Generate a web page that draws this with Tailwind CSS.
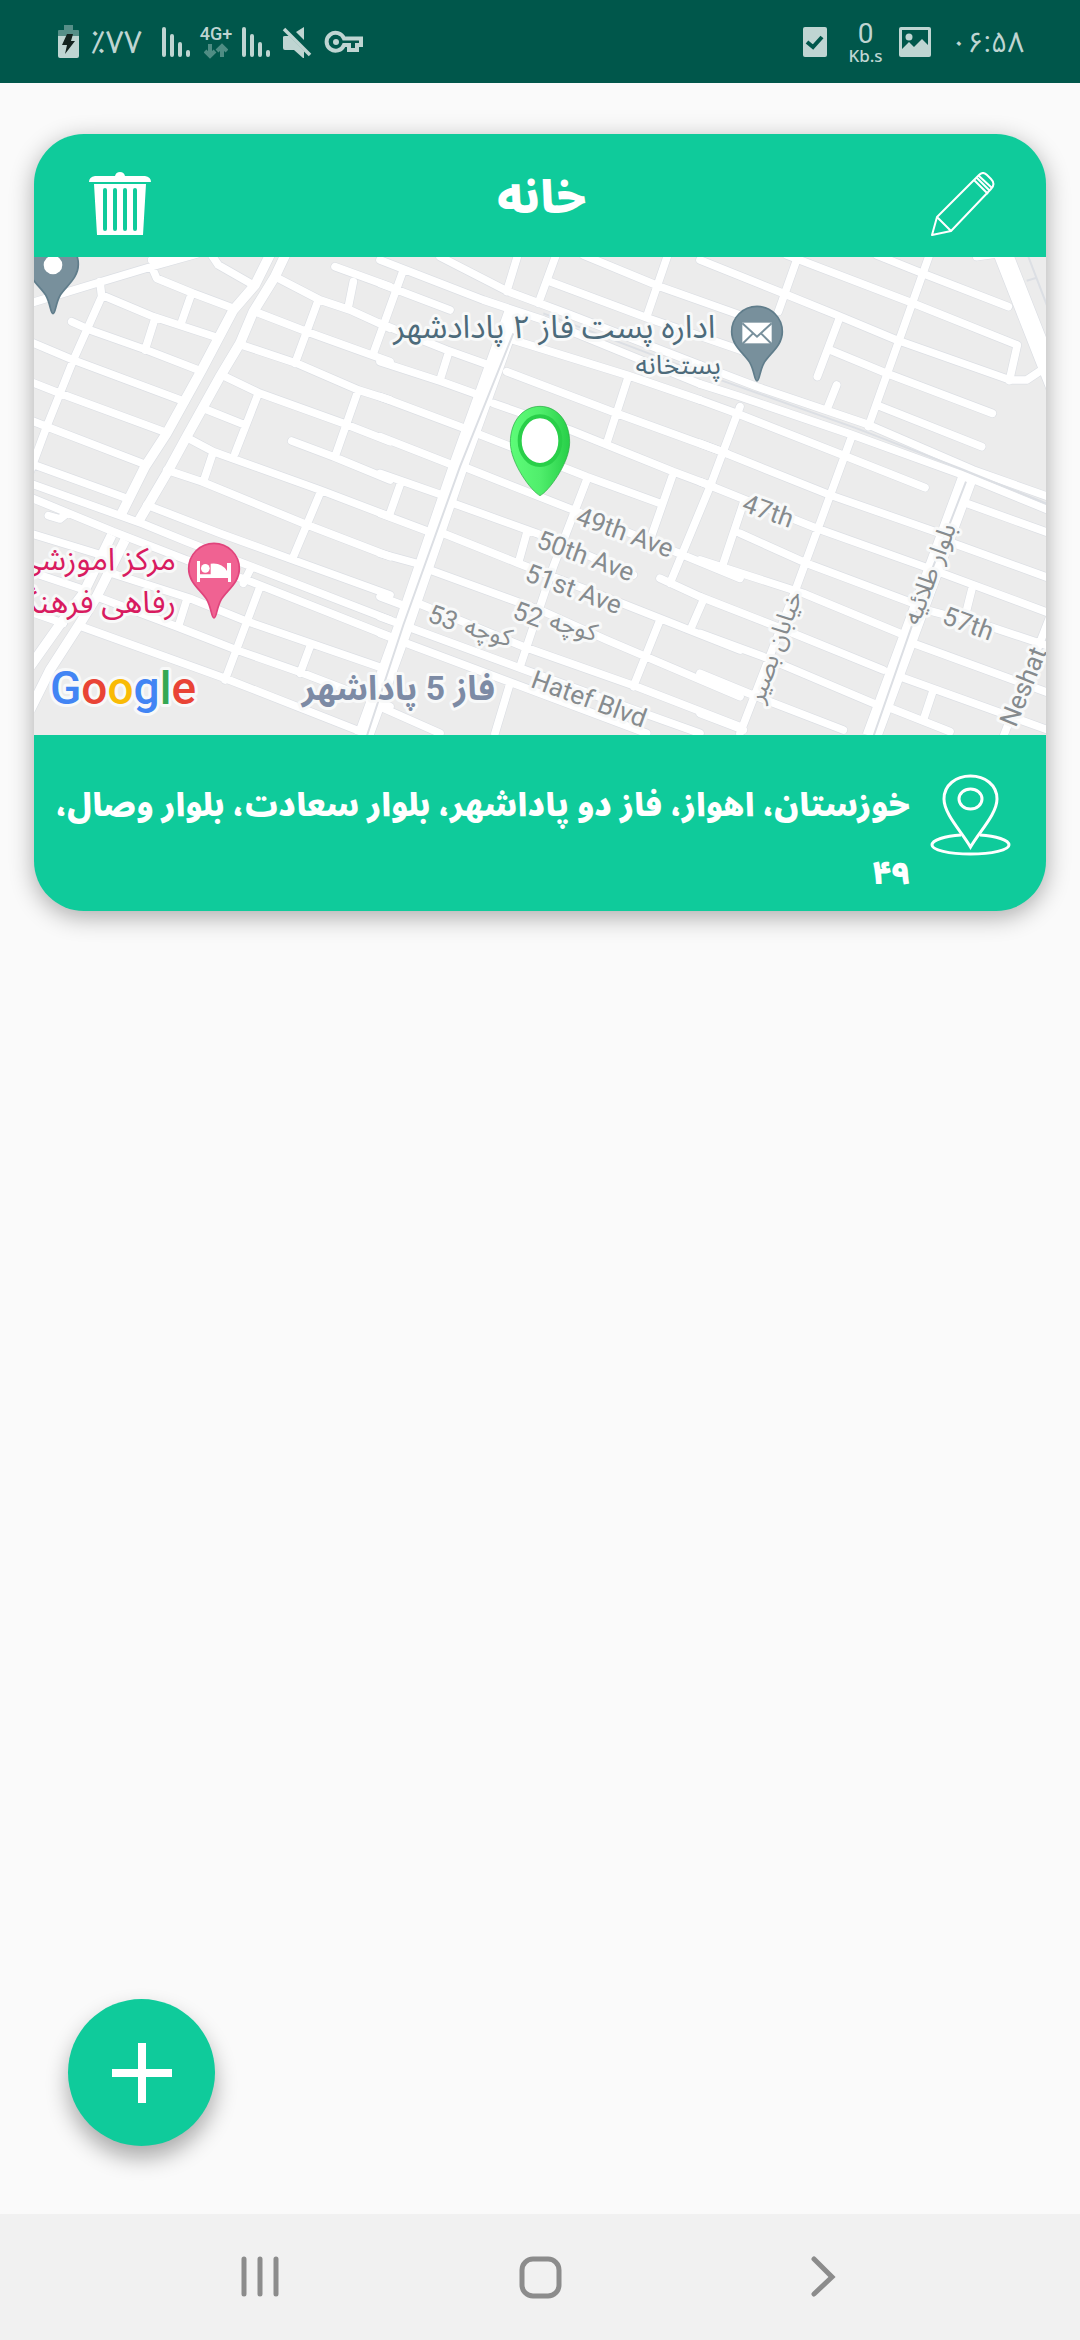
<!DOCTYPE html>
<html lang="fa">
<head>
<meta charset="utf-8">
<meta name="viewport" content="width=device-width, initial-scale=1">
<title>آدرس‌ها</title>
<script src="https://cdn.jsdelivr.net/npm/@tailwindcss/browser@4"></script>
</head>
<body class="flex min-h-screen flex-col bg-[#fafafa] font-['Roboto','Noto_Sans_Arabic','DejaVu_Sans',sans-serif]">

<header class="flex h-[83px] items-center justify-between bg-[#00574b] pr-14 pl-14 text-[#bfd5d2]">
  <div class="flex items-center">
    <svg class="mr-3 h-9 w-6" viewBox="0 0 24 36" fill="currentColor"><path opacity=".45" d="M8 1h9v5h5q1 0 1 1v5H2V7q0-1 1-1h5z"/><path d="M2 12h21v20q0 2-2 2H4q-2 0-2-2z"/><path fill="#14231f" d="M11 10h6l-2 7h4L9 30l2-9H6z"/></svg>
    <span dir="rtl" class="mr-[18px] w-[50px] text-[32px] leading-10 whitespace-nowrap">٪۷۷</span>
    <svg class="mr-2 h-8 w-[30px]" viewBox="0 0 30 32" stroke="currentColor" stroke-width="4" stroke-linecap="round"><path d="M4 3v26M12 10v19M20 18v11M28 26v3"/></svg>
    <div class="mr-1.5 flex w-9 flex-col items-center">
      <span class="text-lg leading-[18px] font-medium">4G+</span>
      <svg class="h-4 w-6" viewBox="0 0 24 16" fill="none" stroke="#4f8d84" stroke-width="4"><path d="M6 1v12M1 8l5 5 5-5M18 14V3M13 8l5-5 5 5"/></svg>
    </div>
    <svg class="mr-3 h-8 w-[30px]" viewBox="0 0 30 32" stroke="currentColor" stroke-width="4" stroke-linecap="round"><path d="M4 3v26M12 10v19M20 18v11M28 26v3"/></svg>
    <svg class="mr-3 h-8 w-[30px]" viewBox="0 0 30 32" fill="currentColor"><path d="M22 1v13l-8-8zM1 11q0-1 2-1h4l15 15v7h-1l-9-8H3q-2 0-2-2z"/><path d="M2 3l26 26" stroke="currentColor" stroke-width="3.500"/></svg>
    <svg class="h-6 w-10" viewBox="0 0 40 24" fill="none" stroke="currentColor" stroke-width="4"><path d="M20 8.500h17V15h-4v5h-8v-5h-5a9 9 0 1 1 0-6.500z"/><circle cx="12" cy="12" r="3" fill="currentColor" stroke="none"/></svg>
  </div>
  <div class="flex items-center">
    <svg class="mr-5 h-8 w-[26px]" viewBox="0 0 26 32"><rect x="1" y="1" width="24" height="30" rx="2" fill="currentColor"/><path d="M5 16l6 5 9-10" fill="none" stroke="#00574b" stroke-width="4"/></svg>
    <div class="mr-4 flex flex-col items-center"><span class="text-[28px] leading-7">0</span><span class="font-['Noto_Sans'] text-[17px] leading-4 font-medium">Kb.s</span></div>
    <svg class="mr-5 h-8 w-8" viewBox="0 0 32 32"><path fill="currentColor" fill-rule="evenodd" d="M2 1h28q2 0 2 2v26q0 2-2 2H2q-2 0-2-2V3q0-2 2-2zm1 3v19l7-7 5 5 8-8 6 6V4z"/><circle cx="10" cy="11" r="3.500" fill="currentColor"/></svg>
    <time dir="ltr" class="text-[29px] leading-10">۰۶:۵۸</time>
  </div>
</header>

<main class="flex grow flex-col justify-between px-[34px] pt-[51px]">
  <article class="overflow-hidden rounded-[50px] bg-[#0fcb9b] text-white shadow-[0_6px_24px_rgba(0,0,0,0.32)]">
    <div class="flex h-[123px] items-center justify-between pt-4 pr-[51px] pl-[54px]">
      <button aria-label="حذف" class="block">
        <svg class="h-16 w-16" viewBox="0 0 64 64" fill="#fff"><path d="M1 10q0-5 6-6h20q1-4 5-4t5 4h20q6 1 6 6z"/><path fill-rule="evenodd" d="M6 12h52l-3 51H9zM15 18v39q0 2 2 2t2-2V18q0-2-2-2t-2 2zm10 0v39q0 2 2 2t2-2V18q0-2-2-2t-2 2zm10 0v39q0 2 2 2t2-2V18q0-2-2-2t-2 2zm10 0v39q0 2 2 2t2-2V18q0-2-2-2t-2 2z"/></svg>
      </button>
      <h1 dir="rtl" class="pb-3 text-[45px] leading-[60px] font-black">خانه</h1>
      <button aria-label="ویرایش" class="block">
        <svg class="h-16 w-16" viewBox="0 0 64 64" fill="none" stroke="#fff" stroke-width="2" stroke-linejoin="round"><path d="M6 45L48 3q4-4 8 0l4 4q5 5 0 10L20 59 1 63zM6 45l14 14M43 8l14 14M45 5l14 14M48 4l13 12"/></svg>
      </button>
    </div>

    <svg class="block h-auto w-full bg-[#ececec]" viewBox="12 21 3036 1434" role="img" aria-label="نقشه">
      <defs>
        <g id="roads" fill="none" stroke-linejoin="round">
          <g stroke-linecap="round">
            <path d="M0 160L215 95L365 50L500 12M365 30L470 10M545 15L565 45L670 105M365 50L380 85L490 130L610 175M210 95L215 140L130 330L90 430L50 530L0 665M215 135L370 200L560 262M485 130L455 215M125 215L180 240L350 300L510 362M375 205L345 300M0 275L130 330L465 455M0 395L90 430L410 548M0 510L50 530L350 645M0 640L290 745M0 700L340 822L470 875L640 940L1080 1110M0 742L250 845L470 930L650 990L1080 1160M350 765L570 850L790 930L1080 1035M410 660L515 695L820 820L1080 920M550 605L520 695M475 565L550 605L870 720L1080 800M520 475L645 525M685 430L615 610M575 375L690 430L940 520L1080 575M635 285L800 340L985 420L1080 450M675 185L830 245L1080 335M735 80L870 150L960 180L1080 235M915 50L1080 110M970 95L955 170M865 150L795 340M985 420L915 620M785 573L910 620L1080 690M870 730L790 920M55 797L90 807L105 795M0 850L230 920M0 965L150 1015M230 965L480 1045L640 1110L1060 1255M200 1040L440 1130L620 1200L820 1270L1080 1370M0 1085L100 1120M155 1130L585 1285L980 1440M470 1050L445 1130M690 1010L585 1290M840 1190L810 1270M660 960L640 1000"/>
            <g transform="translate(1050 0)">
              <path d="M180 20L385 125L560 190L960 345M0 30L310 150L490 210L960 402M0 100L210 180M0 220L200 300L340 350M0 335L185 395L310 440M0 440L280 545M0 560L230 650M0 670L200 740M0 790L160 850M0 910L110 940M0 1040L80 1070M70 60L-20 310M205 310L180 390M60 705L30 790M415 10L380 125M530 10L475 160M510 95L805 205L1110 310M610 15L840 110L1080 195M865 10L800 200M400 270L740 375L960 450M380 365L710 490L1040 610M340 460L570 540L880 665L1000 710M290 550L620 680L840 760M250 650L580 780L1080 985M220 760L470 850L760 975M190 850L415 940L700 1050M150 960L480 1080L680 1170L1080 1340M115 1060L430 1190L770 1310L1080 1430M0 1100L430 1258L820 1400L960 1450M0 1150L400 1300L800 1450M745 380L680 580M1080 470L990 710L870 1000M620 690L520 950L420 1250M880 670L810 870M440 850L415 940M970 1050L935 1130M840 1110L760 1310M390 1300L345 1450M700 1050L1080 1200M840 985L960 1040M0 1370L180 1450"/>
            </g>
            <g transform="translate(2010 0)">
              <path d="M0 30L250 130L410 195L590 270L930 390L980 390L1025 360M260 15L640 160L952 285L928 392M530 15L680 75L925 170M830 20L900 10M290 30L235 185M690 10L505 530M420 200L352 380M390 300L560 370L877 490M530 465L845 590M410 405L380 480M0 345L170 410L500 522L820 660L1050 742M0 402L120 440L450 552L780 672L1050 782M0 450L110 490L440 620L675 713M0 580L65 605L390 735L720 850M0 695L350 835L700 960L1050 1090M120 850L320 940L640 1060M0 930L310 1030L600 1150M0 1040L230 1130L550 1260M0 1150L190 1220L520 1360M0 1270L170 1340L430 1440M0 1390L130 1440M130 760L70 940M455 560L290 1010L120 1450M800 760L1050 850M760 880L1050 985M680 1080L870 1130L1050 1190M640 1180L1050 1330M600 1280L1050 1442M560 1370L750 1445M815 1020L800 1080M700 1320L670 1410M1050 1100L910 1460"/>
            </g>
          </g>
        </g>
        <g id="avenues" fill="none">
          <path d="M722 10L675 105L610 180L515 360L410 550L345 650L270 800M768 10L735 80L670 185L630 280L570 380L470 560L410 670L325 815M245 855L160 1030L85 1130L0 1250M285 870L200 1040L150 1120L60 1260L0 1380"/>
        </g>
        <g id="boulevards" fill="none">
          <path d="M1450 190L1288 640L1120 1130L1000 1460M2810 690L2525 1460M2915 0L3080 420"/>
        </g>
        <linearGradient id="pinGreen"><stop offset="0" stop-color="#5dfc78"/><stop offset=".5" stop-color="#50ee6c"/><stop offset="1" stop-color="#27cf48"/></linearGradient>
        <path id="poi" d="M0 148C-8 148-7 118-22 92C-40 64-76 42-76 0A76 76 0 0 1 76 0C76 42 40 64 22 92C7 118 8 148 0 148Z"/>
      </defs>
      <use href="#roads" stroke="#dcdfe4" stroke-width="27"/>
      <use href="#avenues" stroke="#dcdfe4" stroke-width="33"/>
      <use href="#boulevards" stroke="#dcdfe4" stroke-width="60"/>
      <use href="#roads" stroke="#fff" stroke-width="23"/>
      <use href="#avenues" stroke="#fff" stroke-width="29"/>
      <use href="#boulevards" stroke="#fff" stroke-width="56"/>
      <path d="M1450 250L1290 650L1120 1125L1010 1460M2808 695L2690 1000L2530 1460M1540 190L2000 365L2480 535L2790 655L3060 765M2995 20L3060 190M2990 92l28-8" fill="none" stroke="#dcdfe4" stroke-width="6"/>

      <g font-family="Roboto, 'Noto Sans Arabic', 'DejaVu Sans', sans-serif" stroke="#f8f9f9" stroke-width="18" stroke-linejoin="round" paint-order="stroke">
        <g fill="#868b8e" font-size="78" text-anchor="middle">
          <text transform="translate(1776 872) rotate(20)">49th Ave</text>
          <text transform="translate(1658 943) rotate(20)">50th Ave</text>
          <text transform="translate(1622 1042) rotate(20)">51st Ave</text>
          <text transform="translate(2206 808) rotate(20)">47th</text>
          <text transform="translate(2806 1146) rotate(20)">57th</text>
          <text transform="translate(1668 1372) rotate(20)">Hatef Blvd</text>
          <text transform="translate(3004 1320) rotate(-68)">Neshat</text>
          <text transform="translate(1485 1118) rotate(20)">52</text>
          <text transform="translate(1230 1128) rotate(20)">53</text>
        </g>
        <g fill="#868b8e" font-size="74" text-anchor="middle">
          <text transform="translate(1624 1154) rotate(16)">کوچه</text>
          <text transform="translate(1369 1170) rotate(16)">کوچه</text>
          <text transform="translate(2722 980) rotate(-69)">بلوار طلائیه</text>
          <text transform="translate(2258 1198) rotate(-70)">خیابان بصیر</text>
        </g>
        <g fill="#4d6b7b" text-anchor="middle">
          <text x="1573" y="264" font-size="96">اداره پست فاز ۲ پادادشهر</text>
          <text x="1945" y="372" font-size="80">پستخانه</text>
        </g>
        <g fill="#d81b60" font-size="94" direction="rtl" text-anchor="start">
          <text x="438" y="960">مرکز اموزشی</text>
          <text x="438" y="1088">رفاهی فرهنگیان</text>
        </g>
        <text x="1105" y="1350" font-size="101" font-weight="700" fill="#7d8ba5" direction="rtl" text-anchor="middle">فاز 5 پاداشهر</text>
        <text x="60" y="1362" font-size="138" font-weight="500"><tspan fill="#4285f4">G</tspan><tspan fill="#e94436">o</tspan><tspan fill="#f9bb06">o</tspan><tspan fill="#4285f4">g</tspan><tspan fill="#34a853">l</tspan><tspan fill="#e94436">e</tspan></text>
      </g>

      <g fill="#78909c" stroke="#607d8b" stroke-width="5"><use href="#poi" x="69" y="43"/><use href="#poi" x="2181" y="245"/></g>
      <circle cx="69" cy="45" r="28" fill="#fff"/>
      <path d="M2137 218h88v62h-88z" fill="#fff"/><path d="M2137 220l44 40l44-40M2137 282l32-32M2225 282l-32-32" fill="none" stroke="#78909c" stroke-width="6"/>
      <use href="#poi" x="552" y="956" fill="#f06292" stroke="#e0447c" stroke-width="5"/>
      <path d="M501 933h9v40h32v-32q34-4 49 22v-24h12v57h-9v-12h-84v12h-9z" fill="#fff"/><circle cx="526" cy="955" r="13" fill="#fff"/>
      <path d="M1530 737C1505 725 1441 640 1441 577C1441 515 1478 469 1530 469S1619 515 1619 577C1619 640 1555 725 1530 737Z" fill="url(#pinGreen)" stroke="#22a63c" stroke-width="2"/>
      <ellipse cx="1530" cy="572" rx="61" ry="73" fill="#fff" stroke="#29cf49" stroke-width="12"/>
    </svg>

    <div class="flex min-h-[176px] items-start justify-end gap-5 pt-9 pr-[35px] pl-5">
      <p dir="rtl" class="grow text-right text-[32px] leading-[68px] font-black">خوزستان، اهواز، فاز دو پاداشهر، بلوار سعادت، بلوار وصال، ۴۹</p>
      <svg class="mt-[3px] h-[82px] w-[81px] shrink-0" viewBox="0 0 81 82" fill="none" stroke="#fff" stroke-width="3"><path d="M40.500 73C32 58 14 40 14 25C14 11 26 2 40.500 2S67 11 67 25C67 40 49 58 40.500 73Z"/><ellipse cx="40.500" cy="25" rx="11.500" ry="10"/><path d="M31 61C15 62 2 66 2 71c0 5 17 9 38.500 9S79 76 79 71c0-5-13-9-29-10"/></svg>
    </div>
  </article>

  <button aria-label="افزودن آدرس" class="mb-[68px] ml-[34px] flex size-[147px] items-center justify-center rounded-full bg-[#0fcb9b] shadow-[0_12px_22px_rgba(0,0,0,0.32)]">
    <svg class="size-[60px]" viewBox="0 0 60 60" stroke="#fff" stroke-width="8"><path d="M30 0v60M0 30h60"/></svg>
  </button>
</main>

<nav class="flex h-[126px] items-center justify-between bg-[#f1f1f1] px-[238px] text-[#8c8c8c]">
  <button aria-label="برنامه‌های اخیر"><svg class="h-11 w-11" viewBox="0 0 44 44" stroke="currentColor" stroke-width="5" stroke-linecap="round"><path d="M6 4v35M22 4v35M38 4v35"/></svg></button>
  <button aria-label="خانه"><svg class="h-11 w-11" viewBox="0 0 44 44" fill="none" stroke="currentColor" stroke-width="5"><rect x="4" y="4" width="37" height="37" rx="11"/></svg></button>
  <button aria-label="بازگشت"><svg class="h-11 w-11" viewBox="0 0 44 44" fill="none" stroke="currentColor" stroke-width="5" stroke-linecap="round"><path d="M16 4l18 18-18 17"/></svg></button>
</nav>
</body>
</html>
